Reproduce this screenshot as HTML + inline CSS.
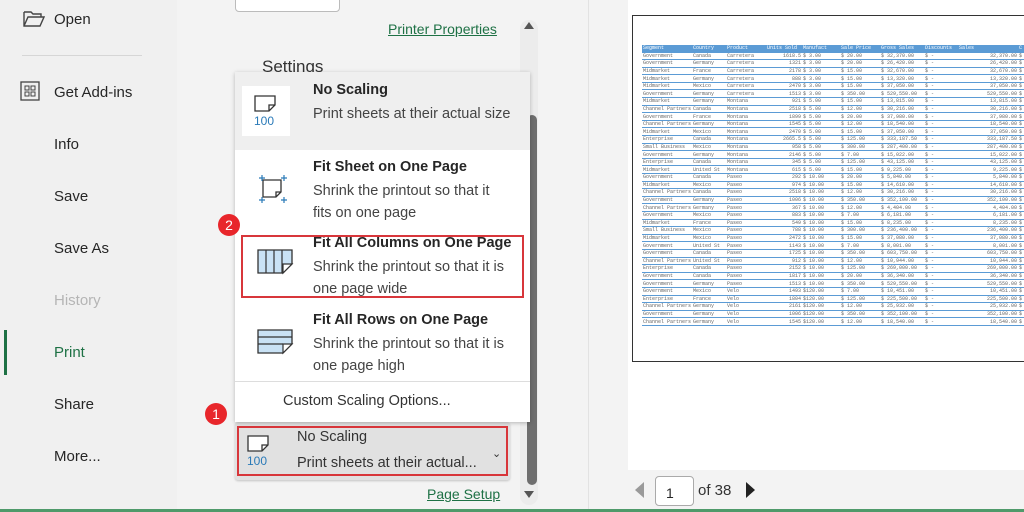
<!DOCTYPE html>
<html><head><meta charset="utf-8"><style>
*{margin:0;padding:0;box-sizing:border-box}
body{width:1024px;height:512px;overflow:hidden;background:#f3f3f3;font-family:"Liberation Sans","DejaVu Sans",sans-serif;position:relative;color:#262626}
.abs{position:absolute}
#nav{left:0;top:0;width:177px;height:512px;background:#f0f0f0}
.ni{position:absolute;left:54px;font-size:15px;color:#262626}
#mid{left:177px;top:0;width:411px;height:512px;background:#f3f3f3}
#prev{left:628px;top:0;width:396px;height:470px;background:#fff}
.link{color:#1e7145;text-decoration:underline;font-size:14px}
#dd{left:235px;top:72px;width:295px;height:350px;background:#fff;box-shadow:0 1px 4px rgba(0,0,0,.25)}
.it{position:absolute;left:0;width:295px}
.t{position:absolute;left:78px;font-size:14.5px;font-weight:bold;color:#262626}
.d{position:absolute;left:78px;font-size:14.5px;color:#444;line-height:22px}
.badge{position:absolute;width:22px;height:22px;border-radius:50%;background:#e8262b;color:#fff;font-size:14px;text-align:center;line-height:22px}
table{border-collapse:collapse;font-family:"Liberation Mono",monospace;font-size:5px;color:#666;table-layout:fixed}
td{height:7.6px;line-height:6px;border-bottom:1px solid #5b9bd5;padding:0 1px;white-space:nowrap;overflow:hidden}
tr.h td{background:#5b9bd5;color:#fff;height:7px}
</style></head><body>
<div id="nav" class="abs">
 <svg class="abs" style="left:23px;top:10px" width="22" height="18" viewBox="0 0 22 18"><path d="M1 2h7l2 2h8v3M1 2v14h16l4-9H5L1 16" fill="none" stroke="#444" stroke-width="1.4"/></svg>
 <div class="ni" style="top:11px">Open</div>
 <div class="abs" style="left:22px;top:55px;width:120px;height:1px;background:#d6d6d6"></div>
 <svg class="abs" style="left:20px;top:81px" width="20" height="20" viewBox="0 0 20 20"><rect x="1" y="1" width="18" height="18" fill="none" stroke="#444" stroke-width="1.3"/><rect x="5" y="5" width="4" height="4" fill="none" stroke="#444"/><rect x="11" y="5" width="4" height="4" fill="none" stroke="#444"/><rect x="5" y="11" width="4" height="4" fill="none" stroke="#444"/><rect x="11" y="11" width="4" height="4" fill="none" stroke="#444"/></svg>
 <div class="ni" style="top:84px">Get Add-ins</div>
 <div class="ni" style="top:136px">Info</div>
 <div class="ni" style="top:188px">Save</div>
 <div class="ni" style="top:240px">Save As</div>
 <div class="ni" style="top:292px;color:#b5b5b5">History</div>
 <div class="abs" style="left:4px;top:330px;width:3px;height:45px;background:#1e7145"></div>
 <div class="ni" style="top:344px;color:#1e7145">Print</div>
 <div class="ni" style="top:396px">Share</div>
 <div class="ni" style="top:448px">More...</div>
</div>
<div id="mid" class="abs"></div>
<div class="abs" style="left:235px;top:-5px;width:105px;height:17px;border:1px solid #bbb;border-radius:4px;background:#fff"></div>
<div class="abs link" style="left:388px;top:21px">Printer Properties</div>
<div class="abs" style="left:262px;top:57px;font-size:17px;color:#333">Settings</div>
<div class="abs" style="left:520px;top:20px;width:18px;height:485px;background:#ececec;border-radius:9px"></div>
<div class="abs" style="left:524px;top:22px;width:0;height:0;border-left:5px solid transparent;border-right:5px solid transparent;border-bottom:7px solid #555"></div>
<div class="abs" style="left:527px;top:115px;width:10px;height:370px;background:#6e6e6e;border-radius:5px"></div>
<div class="abs" style="left:524px;top:491px;width:0;height:0;border-left:5px solid transparent;border-right:5px solid transparent;border-top:7px solid #555"></div>
<div class="abs link" style="left:427px;top:486px">Page Setup</div>

<div class="abs" style="left:235px;top:422px;width:275px;height:58px;background:#e1e1e1;border-radius:3px;box-shadow:0 1px 2px rgba(0,0,0,.2)"></div>
<div class="abs" style="left:237px;top:426px;width:271px;height:50px;border:2px solid #d8363b"></div>
<svg class="abs" style="left:246px;top:434px" width="26" height="34" viewBox="0 0 26 34"><path d="M2 2h20v9l-6 6H2z M16 17v-6h6" fill="#fff" stroke="#333" stroke-width="1.3"/><text x="1" y="31" font-size="12" fill="#2a7ab8" font-family="Liberation Sans">100</text></svg>
<div class="abs" style="left:297px;top:429px;font-size:14.5px;color:#333">No Scaling</div>
<div class="abs" style="left:297px;top:455px;font-size:14.5px;color:#333">Print sheets at their actual...</div>
<div class="abs" style="left:492px;top:447px;font-size:11px;color:#333">⌄</div>
<div class="badge" style="left:205px;top:403px">1</div>

<div id="dd" class="abs">
 <div class="it" style="top:0;height:78px;background:#efefef">
  <div class="abs" style="left:7px;top:14px;width:48px;height:50px;background:#fff"></div>
  <svg class="abs" style="left:18px;top:22px" width="26" height="34" viewBox="0 0 26 34"><path d="M2 2h20v9l-6 6H2z M16 17v-6h6" fill="#fff" stroke="#333" stroke-width="1.3"/><text x="1" y="31" font-size="12" fill="#2a7ab8" font-family="Liberation Sans">100</text></svg>
  <div class="t" style="top:10px">No Scaling</div>
  <div class="d" style="top:31px">Print sheets at their actual size</div>
 </div>
 <div class="it" style="top:78px;height:78px">
  <svg class="abs" style="left:20px;top:21px" width="36" height="36" viewBox="0 0 36 36"><path d="M8 9h18v12l-5 5H8z M21 26v-5h5" fill="none" stroke="#333" stroke-width="1.3"/><path d="M4 7h6M7 4v6M26 7h6M29 4v6M4 29h6M7 26v6M26 29h6M29 26v6" stroke="#2a7ab8" stroke-width="1.2" fill="none"/></svg>
  <div class="t" style="top:9px">Fit Sheet on One Page</div>
  <div class="d" style="top:30px">Shrink the printout so that it<br>fits on one page</div>
 </div>
 <div class="it" style="top:156px;height:77px">
  <svg class="abs" style="left:21px;top:20px" width="38" height="28" viewBox="0 0 38 28"><path d="M2 2h34v14l-9 9H2z" fill="#c9e2f5" stroke="#333" stroke-width="1.3"/><path d="M10 2v23M18 2v23M26 2v23" stroke="#333" stroke-width="1.2"/><path d="M27 25v-9h9z" fill="#fff" stroke="#333" stroke-width="1.2"/></svg>
  <div class="t" style="top:7px">Fit All Columns on One Page</div>
  <div class="d" style="top:28px">Shrink the printout so that it is<br>one page wide</div>
 </div>
 <div class="it" style="top:233px;height:76px">
  <svg class="abs" style="left:21px;top:23px" width="38" height="28" viewBox="0 0 38 28"><path d="M2 2h34v14l-9 9H2z" fill="#c9e2f5" stroke="#333" stroke-width="1.3"/><path d="M2 9h34M2 16h25" stroke="#333" stroke-width="1.2"/><path d="M27 25v-9h9z" fill="#fff" stroke="#333" stroke-width="1.2"/></svg>
  <div class="t" style="top:7px">Fit All Rows on One Page</div>
  <div class="d" style="top:28px">Shrink the printout so that it is<br>one page high</div>
 </div>
 <div class="abs" style="left:0;top:309px;width:295px;height:1px;background:#ddd"></div>
 <div class="abs" style="left:48px;top:321px;font-size:14.5px;color:#333">Custom Scaling Options...</div>
</div>
<div class="abs" style="left:241px;top:235px;width:283px;height:63px;border:2px solid #d8363b"></div>
<div class="badge" style="left:218px;top:214px">2</div>

<div id="prev" class="abs"></div>
<div class="abs" style="left:632px;top:15px;width:400px;height:347px;border:1.5px solid #333;background:#fff"></div>
<div class="abs" style="left:642px;top:45px;width:390px;overflow:hidden">
<table style="width:400px">
<colgroup><col style="width:50px"><col style="width:34px"><col style="width:40px"><col style="width:36px"><col style="width:38px"><col style="width:40px"><col style="width:44px"><col style="width:34px"><col style="width:60px"><col></colgroup>
<tr class="h"><td>Segment</td><td>Country</td><td>Product</td><td>Units Sold</td><td>Manufact</td><td>Sale Price</td><td>Gross Sales</td><td>Discounts</td><td>Sales</td><td>C</td></tr>
<tr><td>Government</td><td>Canada</td><td>Carretera</td><td align=right>1618.5</td><td>$ 3.00</td><td>$ 20.00</td><td>$ 32,370.00</td><td>$ -</td><td align=right>32,370.00</td><td>$</td></tr>
<tr><td>Government</td><td>Germany</td><td>Carretera</td><td align=right>1321</td><td>$ 3.00</td><td>$ 20.00</td><td>$ 26,420.00</td><td>$ -</td><td align=right>26,420.00</td><td>$</td></tr>
<tr><td>Midmarket</td><td>France</td><td>Carretera</td><td align=right>2178</td><td>$ 3.00</td><td>$ 15.00</td><td>$ 32,670.00</td><td>$ -</td><td align=right>32,670.00</td><td>$</td></tr>
<tr><td>Midmarket</td><td>Germany</td><td>Carretera</td><td align=right>888</td><td>$ 3.00</td><td>$ 15.00</td><td>$ 13,320.00</td><td>$ -</td><td align=right>13,320.00</td><td>$</td></tr>
<tr><td>Midmarket</td><td>Mexico</td><td>Carretera</td><td align=right>2470</td><td>$ 3.00</td><td>$ 15.00</td><td>$ 37,050.00</td><td>$ -</td><td align=right>37,050.00</td><td>$</td></tr>
<tr><td>Government</td><td>Germany</td><td>Carretera</td><td align=right>1513</td><td>$ 3.00</td><td>$ 350.00</td><td>$ 529,550.00</td><td>$ -</td><td align=right>529,550.00</td><td>$</td></tr>
<tr><td>Midmarket</td><td>Germany</td><td>Montana</td><td align=right>921</td><td>$ 5.00</td><td>$ 15.00</td><td>$ 13,815.00</td><td>$ -</td><td align=right>13,815.00</td><td>$</td></tr>
<tr><td>Channel Partners</td><td>Canada</td><td>Montana</td><td align=right>2518</td><td>$ 5.00</td><td>$ 12.00</td><td>$ 30,216.00</td><td>$ -</td><td align=right>30,216.00</td><td>$</td></tr>
<tr><td>Government</td><td>France</td><td>Montana</td><td align=right>1899</td><td>$ 5.00</td><td>$ 20.00</td><td>$ 37,980.00</td><td>$ -</td><td align=right>37,980.00</td><td>$</td></tr>
<tr><td>Channel Partners</td><td>Germany</td><td>Montana</td><td align=right>1545</td><td>$ 5.00</td><td>$ 12.00</td><td>$ 18,540.00</td><td>$ -</td><td align=right>18,540.00</td><td>$</td></tr>
<tr><td>Midmarket</td><td>Mexico</td><td>Montana</td><td align=right>2470</td><td>$ 5.00</td><td>$ 15.00</td><td>$ 37,050.00</td><td>$ -</td><td align=right>37,050.00</td><td>$</td></tr>
<tr><td>Enterprise</td><td>Canada</td><td>Montana</td><td align=right>2665.5</td><td>$ 5.00</td><td>$ 125.00</td><td>$ 333,187.50</td><td>$ -</td><td align=right>333,187.50</td><td>$</td></tr>
<tr><td>Small Business</td><td>Mexico</td><td>Montana</td><td align=right>958</td><td>$ 5.00</td><td>$ 300.00</td><td>$ 287,400.00</td><td>$ -</td><td align=right>287,400.00</td><td>$</td></tr>
<tr><td>Government</td><td>Germany</td><td>Montana</td><td align=right>2146</td><td>$ 5.00</td><td>$ 7.00</td><td>$ 15,022.00</td><td>$ -</td><td align=right>15,022.00</td><td>$</td></tr>
<tr><td>Enterprise</td><td>Canada</td><td>Montana</td><td align=right>345</td><td>$ 5.00</td><td>$ 125.00</td><td>$ 43,125.00</td><td>$ -</td><td align=right>43,125.00</td><td>$</td></tr>
<tr><td>Midmarket</td><td>United St</td><td>Montana</td><td align=right>615</td><td>$ 5.00</td><td>$ 15.00</td><td>$ 9,225.00</td><td>$ -</td><td align=right>9,225.00</td><td>$</td></tr>
<tr><td>Government</td><td>Canada</td><td>Paseo</td><td align=right>292</td><td>$ 10.00</td><td>$ 20.00</td><td>$ 5,840.00</td><td>$ -</td><td align=right>5,840.00</td><td>$</td></tr>
<tr><td>Midmarket</td><td>Mexico</td><td>Paseo</td><td align=right>974</td><td>$ 10.00</td><td>$ 15.00</td><td>$ 14,610.00</td><td>$ -</td><td align=right>14,610.00</td><td>$</td></tr>
<tr><td>Channel Partners</td><td>Canada</td><td>Paseo</td><td align=right>2518</td><td>$ 10.00</td><td>$ 12.00</td><td>$ 30,216.00</td><td>$ -</td><td align=right>30,216.00</td><td>$</td></tr>
<tr><td>Government</td><td>Germany</td><td>Paseo</td><td align=right>1006</td><td>$ 10.00</td><td>$ 350.00</td><td>$ 352,100.00</td><td>$ -</td><td align=right>352,100.00</td><td>$</td></tr>
<tr><td>Channel Partners</td><td>Germany</td><td>Paseo</td><td align=right>367</td><td>$ 10.00</td><td>$ 12.00</td><td>$ 4,404.00</td><td>$ -</td><td align=right>4,404.00</td><td>$</td></tr>
<tr><td>Government</td><td>Mexico</td><td>Paseo</td><td align=right>883</td><td>$ 10.00</td><td>$ 7.00</td><td>$ 6,181.00</td><td>$ -</td><td align=right>6,181.00</td><td>$</td></tr>
<tr><td>Midmarket</td><td>France</td><td>Paseo</td><td align=right>549</td><td>$ 10.00</td><td>$ 15.00</td><td>$ 8,235.00</td><td>$ -</td><td align=right>8,235.00</td><td>$</td></tr>
<tr><td>Small Business</td><td>Mexico</td><td>Paseo</td><td align=right>788</td><td>$ 10.00</td><td>$ 300.00</td><td>$ 236,400.00</td><td>$ -</td><td align=right>236,400.00</td><td>$</td></tr>
<tr><td>Midmarket</td><td>Mexico</td><td>Paseo</td><td align=right>2472</td><td>$ 10.00</td><td>$ 15.00</td><td>$ 37,080.00</td><td>$ -</td><td align=right>37,080.00</td><td>$</td></tr>
<tr><td>Government</td><td>United St</td><td>Paseo</td><td align=right>1143</td><td>$ 10.00</td><td>$ 7.00</td><td>$ 8,001.00</td><td>$ -</td><td align=right>8,001.00</td><td>$</td></tr>
<tr><td>Government</td><td>Canada</td><td>Paseo</td><td align=right>1725</td><td>$ 10.00</td><td>$ 350.00</td><td>$ 603,750.00</td><td>$ -</td><td align=right>603,750.00</td><td>$</td></tr>
<tr><td>Channel Partners</td><td>United St</td><td>Paseo</td><td align=right>912</td><td>$ 10.00</td><td>$ 12.00</td><td>$ 10,944.00</td><td>$ -</td><td align=right>10,944.00</td><td>$</td></tr>
<tr><td>Enterprise</td><td>Canada</td><td>Paseo</td><td align=right>2152</td><td>$ 10.00</td><td>$ 125.00</td><td>$ 269,000.00</td><td>$ -</td><td align=right>269,000.00</td><td>$</td></tr>
<tr><td>Government</td><td>Canada</td><td>Paseo</td><td align=right>1817</td><td>$ 10.00</td><td>$ 20.00</td><td>$ 36,340.00</td><td>$ -</td><td align=right>36,340.00</td><td>$</td></tr>
<tr><td>Government</td><td>Germany</td><td>Paseo</td><td align=right>1513</td><td>$ 10.00</td><td>$ 350.00</td><td>$ 529,550.00</td><td>$ -</td><td align=right>529,550.00</td><td>$</td></tr>
<tr><td>Government</td><td>Mexico</td><td>Velo</td><td align=right>1493</td><td>$120.00</td><td>$ 7.00</td><td>$ 10,451.00</td><td>$ -</td><td align=right>10,451.00</td><td>$</td></tr>
<tr><td>Enterprise</td><td>France</td><td>Velo</td><td align=right>1804</td><td>$120.00</td><td>$ 125.00</td><td>$ 225,500.00</td><td>$ -</td><td align=right>225,500.00</td><td>$</td></tr>
<tr><td>Channel Partners</td><td>Germany</td><td>Velo</td><td align=right>2161</td><td>$120.00</td><td>$ 12.00</td><td>$ 25,932.00</td><td>$ -</td><td align=right>25,932.00</td><td>$</td></tr>
<tr><td>Government</td><td>Germany</td><td>Velo</td><td align=right>1006</td><td>$120.00</td><td>$ 350.00</td><td>$ 352,100.00</td><td>$ -</td><td align=right>352,100.00</td><td>$</td></tr>
<tr><td>Channel Partners</td><td>Germany</td><td>Velo</td><td align=right>1545</td><td>$120.00</td><td>$ 12.00</td><td>$ 18,540.00</td><td>$ -</td><td align=right>18,540.00</td><td>$</td></tr>
</table></div>
<div class="abs" style="left:588px;top:0;width:1px;height:512px;background:#e2e2e2"></div>
<div class="abs" style="left:635px;top:482px;width:0;height:0;border-top:8px solid transparent;border-bottom:8px solid transparent;border-right:9px solid #9a9a9a"></div>
<div class="abs" style="left:655px;top:476px;width:39px;height:30px;border:1px solid #aaa;border-radius:4px;background:#fff;font-size:14px;padding:8px 0 0 10px">1</div>
<div class="abs" style="left:698px;top:482px;font-size:15px;color:#333">of 38</div>
<div class="abs" style="left:746px;top:482px;width:0;height:0;border-top:8px solid transparent;border-bottom:8px solid transparent;border-left:9px solid #222"></div>
<div class="abs" style="left:0;top:509px;width:1024px;height:3px;background:#4f9a6a"></div>
</body></html>
